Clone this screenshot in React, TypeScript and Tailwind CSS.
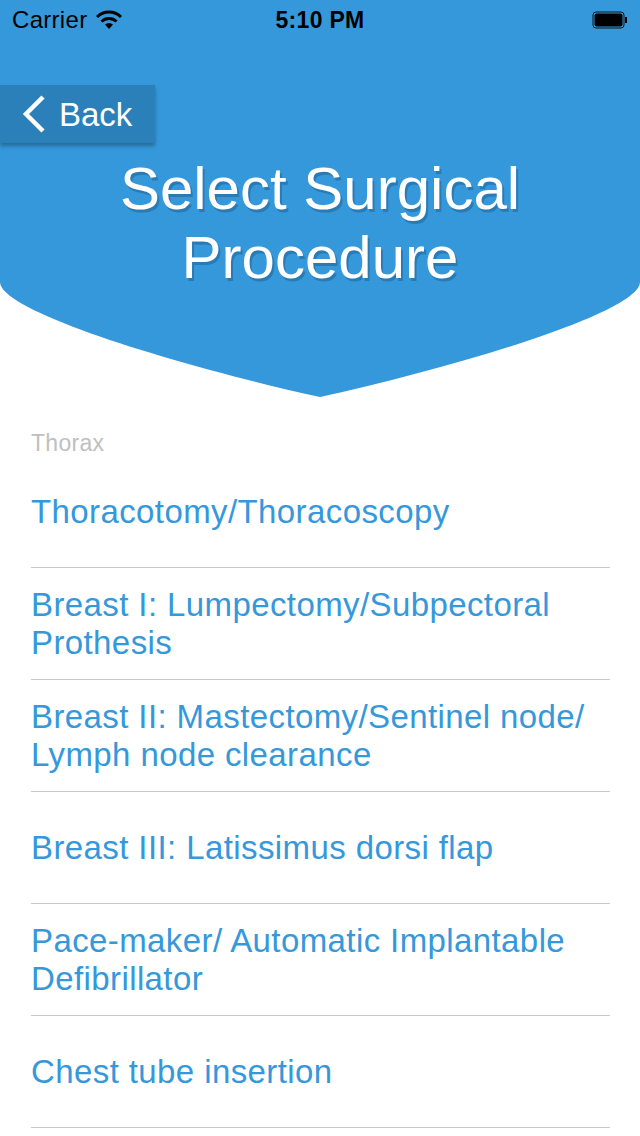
import React from 'react';

const items = [
  'Thoracotomy/Thoracoscopy',
  'Breast I: Lumpectomy/Subpectoral Prothesis',
  'Breast II: Mastectomy/Sentinel node/ Lymph node clearance',
  'Breast III: Latissimus dorsi flap',
  'Pace-maker/ Automatic Implantable Defibrillator',
  'Chest tube insertion',
];

const StatusBar = () => (
  <div className="h-[40px] flex items-center justify-between px-[12px] text-black text-[24px] tracking-[0.3px]">
    <div className="flex items-center gap-[9px] w-[160px]">
      <span>Carrier</span>
      <svg width="26" height="20" viewBox="0 0 26 20">
        <path d="M1 7 A17 17 0 0 1 25 7" stroke="black" strokeWidth="3" fill="none" />
        <path d="M5.5 11.5 A11 11 0 0 1 20.5 11.5" stroke="black" strokeWidth="3" fill="none" />
        <path d="M13 19 L9 14.5 A6 6 0 0 1 17 14.5 Z" fill="black" />
      </svg>
    </div>
    <span className="font-semibold text-[23px]">5:10 PM</span>
    <div className="w-[160px] flex justify-end">
      <svg width="36" height="18" viewBox="0 0 36 18">
        <rect x="1" y="1" width="31" height="16" rx="3" fill="none" stroke="#111" strokeWidth="1" />
        <rect x="2.5" y="2.5" width="28" height="13" rx="2" fill="#000" />
        <rect x="33" y="6" width="2" height="6" fill="#000" />
      </svg>
    </div>
  </div>
);

export default function App() {
  return (
    <div className="w-[640px] min-h-[1136px] bg-white font-['Liberation_Sans']">
      {/* header */}
      <div className="relative h-[397px]">
        <svg className="absolute inset-0" width="640" height="397" viewBox="0 0 640 397">
          <path d="M0 0 H640 V282 C640 312 460 366 320 397 C180 366 0 312 0 282 Z" fill="#3598db" />
        </svg>
        <div className="relative">
          <StatusBar />
          <div className="mt-[45px] w-[155px] h-[58px] bg-[#2b80ba] shadow-[0_3px_4px_rgba(0,0,0,0.3)] flex items-center pl-[22px] gap-[13px]">
            <svg width="24" height="40" viewBox="0 0 24 40">
              <path d="M21 3 L4 20 L21 37" stroke="white" strokeWidth="4.5" fill="none" />
            </svg>
            <span className="text-white text-[33px] leading-none">Back</span>
          </div>
          <h1 className="mt-[11px] text-center text-white text-[60px] leading-[69px] [text-shadow:2px_3px_0_#2a7ab3]">
            Select Surgical
            <br />
            Procedure
          </h1>
        </div>
      </div>

      {/* list */}
      <div className="pl-[31px] pr-[30px]">
        <div className="h-[59px] pt-[33px] text-[23px] leading-[26px] tracking-[0.3px] text-[#c0c0c0]">Thorax</div>
        {items.map((t) => (
          <div
            key={t}
            className="h-[112px] flex items-center border-b border-[#c8c7cc] text-[#3598db] text-[33px] leading-[38px] tracking-[0.4px]"
          >
            <span className="pr-[10px]">{t}</span>
          </div>
        ))}
      </div>
    </div>
  );
}
